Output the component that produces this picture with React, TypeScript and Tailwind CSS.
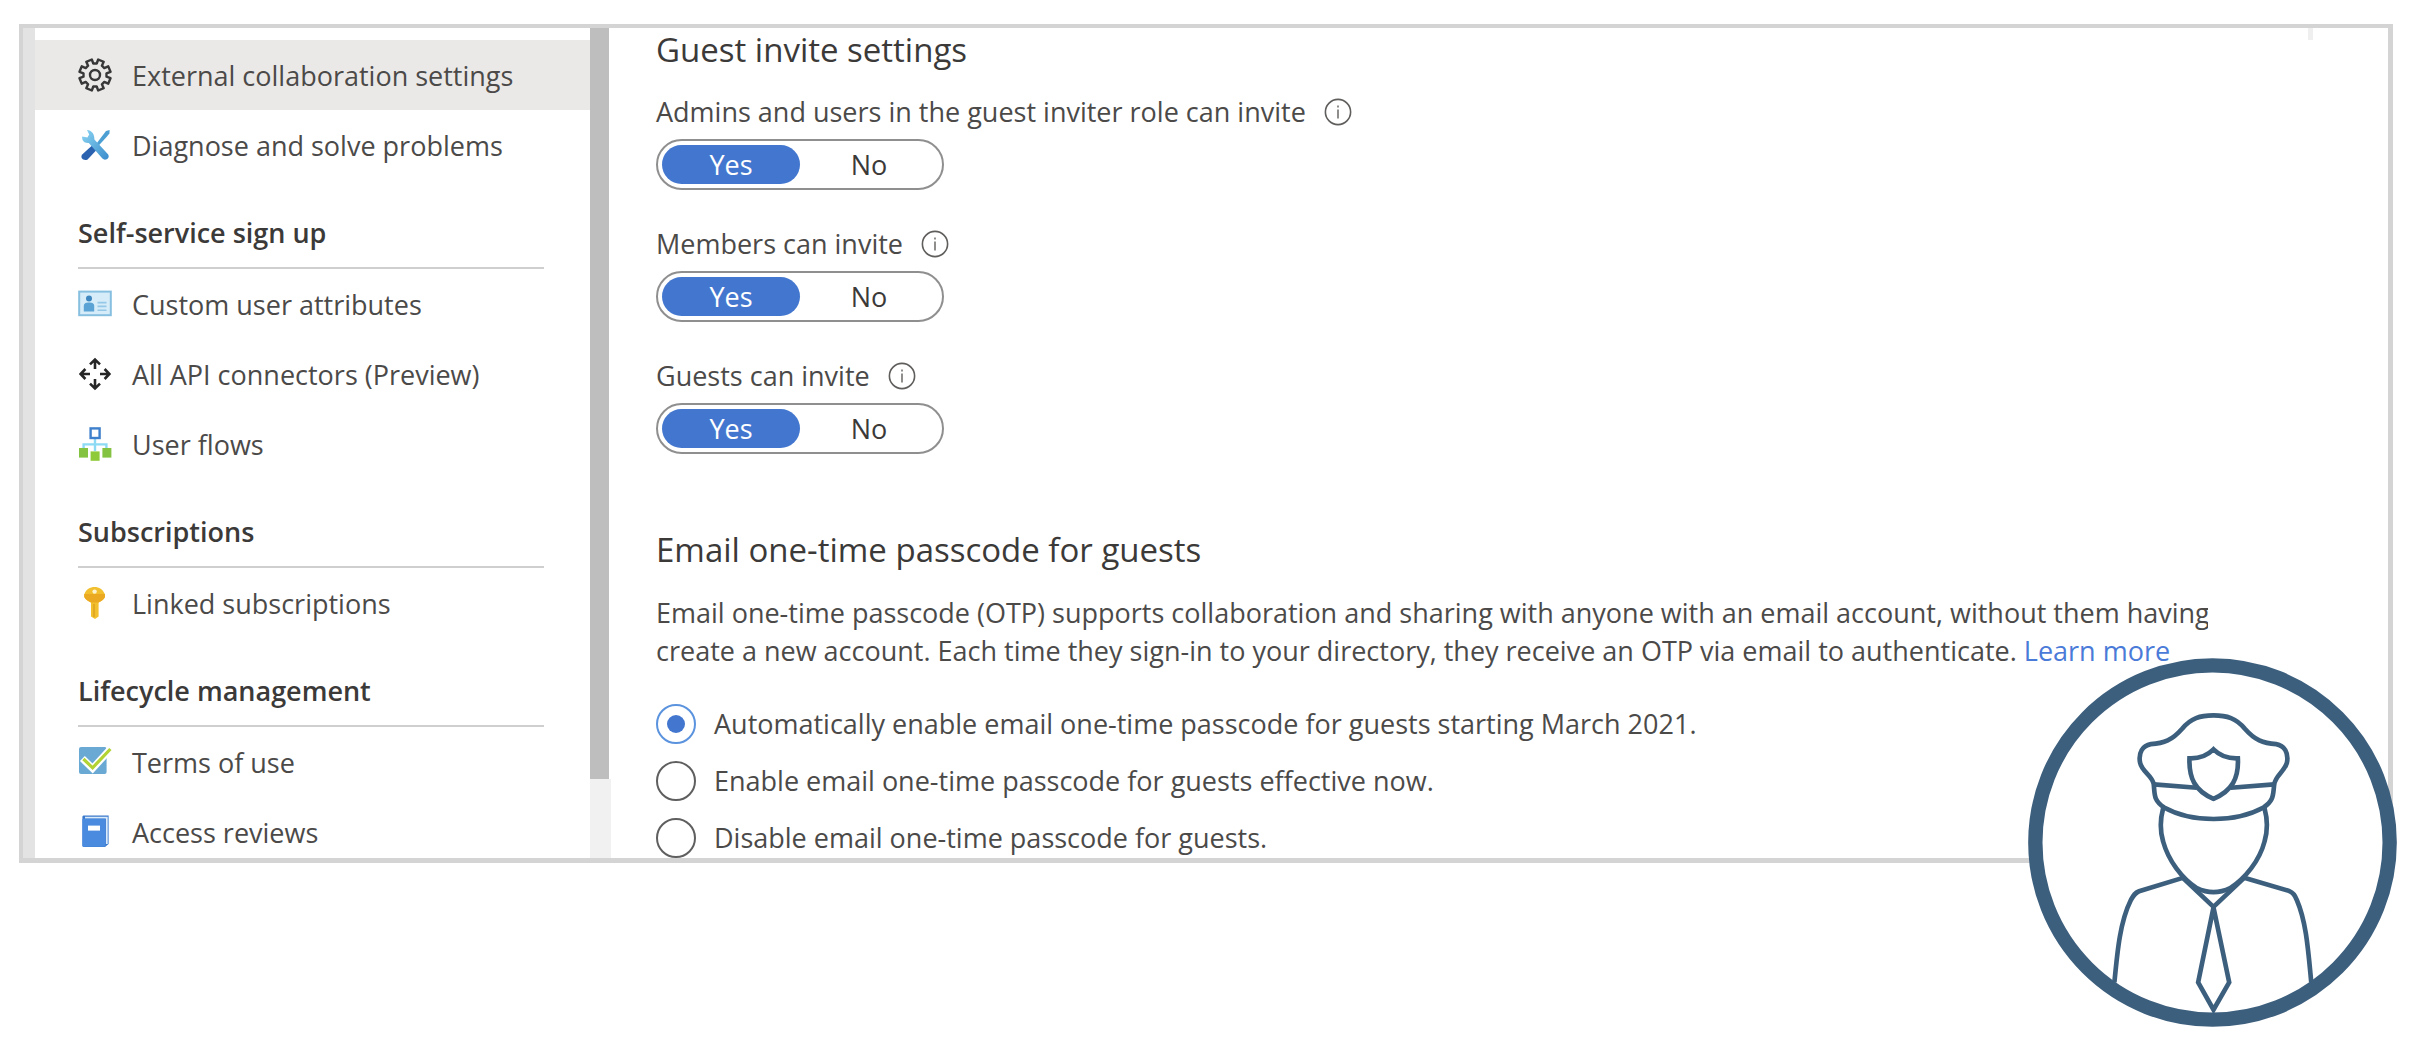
import { useState } from "react";
import type { ReactNode } from "react";

type NavItem = { label: string; icon: ReactNode; active?: boolean };
type NavGroup = { title?: string; items: NavItem[] };

/** Outline of an eight-toothed gear centred on (17, 17), with a notch at the top. */
function gearPath() {
  const points: string[] = [];
  for (let tooth = 0; tooth < 8; tooth++) {
    const middle = tooth * 45 + 22.5 - 90;
    const corners = [
      [-14, 11.6],
      [-11, 15.8],
      [11, 15.8],
      [14, 11.6],
    ];
    for (const [offset, radius] of corners) {
      const angle = ((middle + offset) * Math.PI) / 180;
      points.push(`${(17 + radius * Math.cos(angle)).toFixed(1)} ${(17 + radius * Math.sin(angle)).toFixed(1)}`);
    }
  }
  return `M${points.join("L")}Z`;
}

const GearIcon = () => (
  <svg viewBox="0 0 34 34" className="size-[34px]" fill="none" stroke="#383838" strokeWidth="2.4" strokeLinejoin="round">
    <path d={gearPath()} />
    <circle cx="17" cy="17" r="5" />
  </svg>
);

const ToolsIcon = () => (
  <svg viewBox="0 0 34 34" className="size-[34px]">
    <defs>
      <linearGradient id="wrench" x1="0" y1="0" x2="1" y2="1">
        <stop offset="0" stopColor="#8ad4f2" />
        <stop offset="1" stopColor="#3a8ccc" />
      </linearGradient>
    </defs>
    <path d="M28 3 31.6 2 31.4 5.6 29 8.4 19.6 18.8 17.6 16.8Z" fill="#4b9fd2" />
    <path d="M14.6 17 19 21.4 9.6 31.4C6 33.6 1.6 30 4.2 26.6Z" fill="#2a62b0" />
    <path d="M9 2 11.2 6.4 9.4 9.4 4.2 8.6C3.6 12.6 6.4 15.6 10.8 15L24.4 30.6C27.4 33.6 32.6 29.8 30 26.2L16.4 11.6C16.6 5.8 13.6 2.4 9 2Z" fill="url(#wrench)" />
  </svg>
);

const CardIcon = () => (
  <svg viewBox="0 0 34 34" className="size-[34px]">
    <rect x="1.2" y="4.6" width="31.6" height="23.6" fill="#d6edf9" stroke="#86bfe0" strokeWidth="2" />
    <circle cx="11" cy="11.6" r="3" fill="#3e87c0" />
    <path d="M5.8 24.4V19C5.8 16 8 15.4 11 15.4S16.2 16 16.2 19V24.4Z" fill="#5aa3d4" />
    <path d="M19.5 15.6H28.5M19.5 19.4H28.5M19.5 23.2H28.5" stroke="#94c8e6" strokeWidth="1.6" />
  </svg>
);

const ArrowsIcon = () => (
  <svg viewBox="0 0 34 34" className="size-[34px]" fill="none" stroke="#262626" strokeWidth="2.6">
    <path d="M17 12V3M12 7.4 17 2.6 22 7.4M17 22V31M12 26.6 17 31.4 22 26.6M12 17H3M7.4 12 2.6 17 7.4 22M22 17H31M26.6 12 31.4 17 26.6 22" />
  </svg>
);

const FlowIcon = () => (
  <svg viewBox="0 0 34 34" className="size-[34px]">
    <path d="M17 12V24M5.6 22V17.4H28.4V22" fill="none" stroke="#8cdaf4" strokeWidth="2.4" />
    <rect x="12.6" y="1.4" width="9" height="9.6" fill="#fff" stroke="#3f80cc" strokeWidth="2.4" />
    <rect x="1" y="21" width="9" height="9.6" fill="#84c341" />
    <rect x="24.4" y="21" width="9" height="9.6" fill="#84c341" />
    <rect x="12.6" y="24.4" width="9" height="9.4" fill="#8fca3a" />
  </svg>
);

const KeyIcon = () => (
  <svg viewBox="0 0 34 34" className="size-[34px]">
    <path d="M16.6 1C21 1 25 3.6 26.8 8 27.8 11.4 26 14 20.6 16.4V30.4L17 33 13 30.4V16.4C7.4 14 5.4 11.4 6.4 8 8 3.6 12 1 16.6 1Z" fill="#f2c02f" />
    <path d="M6.4 8C5.4 11.4 7.4 14 13 16.4H20.6C26 14 27.8 11.4 26.8 8Z" fill="#eaa921" />
    <circle cx="16.6" cy="5.6" r="2.2" fill="#fdf3cf" />
    <path d="M16 18V31" stroke="#dda41f" strokeWidth="1.6" />
  </svg>
);

const TermsIcon = () => (
  <svg viewBox="0 0 34 34" className="size-[34px]">
    <rect x="1" y="2" width="27.6" height="27" rx="2" fill="#6aa9d4" />
    <path d="M4.4 13.6 14.6 23.4 31.6 5" fill="none" stroke="#fff" strokeWidth="7" />
    <path d="M5.4 14 14.6 22.8 32.4 4" fill="none" stroke="#b3d334" strokeWidth="3.2" />
  </svg>
);

const BookIcon = () => (
  <svg viewBox="0 0 34 34" className="size-[34px]">
    <path d="M6 .5H30.6V29L27 32H6C4.8 32 4.4 31 4.4 30V2C4.4 1 5 .5 6 .5Z" fill="#3a78cc" />
    <path d="M7 2.6H28.8V29" fill="none" stroke="#dcebfa" strokeWidth="1.8" />
    <rect x="4.4" y="3.8" width="23" height="28" rx="1" fill="#4a8be0" />
    <rect x="10" y="10.6" width="12" height="5" fill="#fff" />
  </svg>
);

const InfoIcon = () => (
  <svg viewBox="0 0 28 28" className="size-7" fill="none" stroke="#605e5c">
    <circle cx="14" cy="14" r="12.6" strokeWidth="1.6" />
    <path d="M14 11.6V20.4M14 7.6V9.6" strokeWidth="1.4" />
  </svg>
);

const OfficerBadge = () => (
  <svg
    viewBox="84 52 1106 1106"
    className="block size-[369px]"
    fill="none"
    stroke="#3d5f7e"
    strokeWidth="14"
    role="img"
    aria-label="Officer"
  >
    <circle cx="637" cy="605" r="531" fill="#fff" strokeWidth="43" />
    <path d="M489 503C480 536 480 572 489 602 505 660 545 712 590 742Q640 766 690 742C735 712 778 660 793 602 802 572 802 536 793 503" />
    <path d="M461 431C457 404 426 394 420 366 414 336 428 314 452 310 492 308 516 298 546 264 572 232 600 224 640 224S708 232 734 264C764 298 788 308 828 310 852 314 866 336 860 366 852 394 826 404 822 431 818 462 822 478 790 500 706 546 574 546 492 500 460 478 464 462 461 431Z" />
    <path d="M461 431 590 441M692 441 822 431" />
    <path d="M640 326C622 344 598 354 568 353 566 412 584 450 640 474 696 450 716 412 713 353 684 354 658 344 640 326Z" />
    <path d="M548 711 417 751C404 756 400 764 392 778 360 842 352 930 343 1024M732 711 866 750C880 756 884 764 890 778 918 842 924 930 933 1024" />
    <path d="M548 711 640 798 732 711" />
    <path d="M640 800 594 1024 640 1106 687 1024Z" />
  </svg>
);

const groups: NavGroup[] = [
  {
    items: [
      { label: "External collaboration settings", icon: <GearIcon />, active: true },
      { label: "Diagnose and solve problems", icon: <ToolsIcon /> },
    ],
  },
  {
    title: "Self-service sign up",
    items: [
      { label: "Custom user attributes", icon: <CardIcon /> },
      { label: "All API connectors (Preview)", icon: <ArrowsIcon /> },
      { label: "User flows", icon: <FlowIcon /> },
    ],
  },
  { title: "Subscriptions", items: [{ label: "Linked subscriptions", icon: <KeyIcon /> }] },
  {
    title: "Lifecycle management",
    items: [
      { label: "Terms of use", icon: <TermsIcon /> },
      { label: "Access reviews", icon: <BookIcon /> },
    ],
  },
];

const passcodeOptions = [
  "Automatically enable email one-time passcode for guests starting March 2021.",
  "Enable email one-time passcode for guests effective now.",
  "Disable email one-time passcode for guests.",
];

function Sidebar() {
  return (
    <nav className="w-[555px] shrink-0 overflow-hidden pt-3 contain-size" aria-label="Settings">
      {groups.map((group, i) => (
        <section key={i}>
          {group.title && (
            <h3 className="ml-[43px] mr-[46px] h-[89px] border-b-2 border-[#cfcfcf] pt-8 leading-[42px] font-semibold text-[#3b3a39]">
              {group.title}
            </h3>
          )}
          <ul>
            {group.items.map((item) => (
              <li key={item.label}>
                <a
                  href="#"
                  aria-current={item.active ? "page" : undefined}
                  className={
                    item.active
                      ? "flex h-[70px] items-center gap-5 bg-[#ebe9e8] pl-[43px]"
                      : "flex h-[70px] items-center gap-5 pl-[43px]"
                  }
                >
                  {item.icon}
                  <span className="pt-0.5">{item.label}</span>
                </a>
              </li>
            ))}
          </ul>
        </section>
      ))}
    </nav>
  );
}

function Toggle({ label }: { label: string }) {
  const [on, setOn] = useState(true);
  const chosen = "h-full flex-1 rounded-full bg-[#4377cf] text-white";
  const plain = "h-full flex-1 rounded-full text-[#3b3a39]";
  return (
    <div role="group" aria-label={label}>
      <div className="flex h-10 items-center gap-[18px]">
        <span>{label}</span>
        <InfoIcon />
      </div>
      <div className="mt-[7px] flex h-[51px] w-[288px] rounded-full border-2 border-[#8f8f8f] p-1">
        <button type="button" aria-pressed={on} onClick={() => setOn(true)} className={on ? chosen : plain}>
          Yes
        </button>
        <button type="button" aria-pressed={!on} onClick={() => setOn(false)} className={on ? plain : chosen}>
          No
        </button>
      </div>
    </div>
  );
}

export default function App() {
  return (
    <div className="relative bg-white pt-6 pr-[25px] pb-[180px] pl-[19px] font-['Open_Sans','Noto_Sans',sans-serif] text-[27px] leading-[38px] text-[#4b4a49]">
      <div className="relative flex border-4 border-r-[5px] border-b-[5px] border-[#d4d4d4]">
        <div className="w-3 shrink-0 bg-[#e3e3e3]" />
        <Sidebar />
        <div className="flex w-[21px] shrink-0 flex-col">
          <div className="w-[19px] flex-1 bg-[#bebebe]" />
          <div className="h-[79px] bg-[#f1f1f1]" />
        </div>
        <main className="min-w-0 flex-1 pl-[45px]">
          <h2 className="text-[33px] leading-[44px] text-[#3b3a39]">Guest invite settings</h2>
          <div className="mt-5 flex flex-col gap-[34px]">
            <Toggle label="Admins and users in the guest inviter role can invite" />
            <Toggle label="Members can invite" />
            <Toggle label="Guests can invite" />
          </div>
          <h2 className="mt-[74px] text-[33px] leading-[44px] text-[#3b3a39]">Email one-time passcode for guests</h2>
          <p className="mt-[22px] max-w-[1552px] overflow-hidden whitespace-nowrap">
            Email one-time passcode (OTP) supports collaboration and sharing with anyone with an email account, without them having
            <br />
            create a new account. Each time they sign-in to your directory, they receive an OTP via email to authenticate.{" "}
            <a href="#" className="text-[#4a7bd8]">
              Learn more
            </a>
          </p>
          <fieldset className="mt-[34px] flex flex-col gap-[17px]">
            {passcodeOptions.map((option, i) => (
              <label key={option} className="flex h-10 items-center gap-[18px]">
                <input
                  type="radio"
                  name="passcode"
                  defaultChecked={i === 0}
                  className="grid size-10 shrink-0 appearance-none place-content-center rounded-full border-2 border-[#5f5f5f] before:size-[18px] before:rounded-full checked:border-[#5b93de] checked:before:bg-[#4377cf]"
                />
                {option}
              </label>
            ))}
          </fieldset>
        </main>
        <div className="absolute top-0 right-[75px] h-3 w-[5px] bg-[#efefef]" />
      </div>
      <div className="absolute right-[21px] bottom-4">
        <OfficerBadge />
      </div>
    </div>
  );
}
